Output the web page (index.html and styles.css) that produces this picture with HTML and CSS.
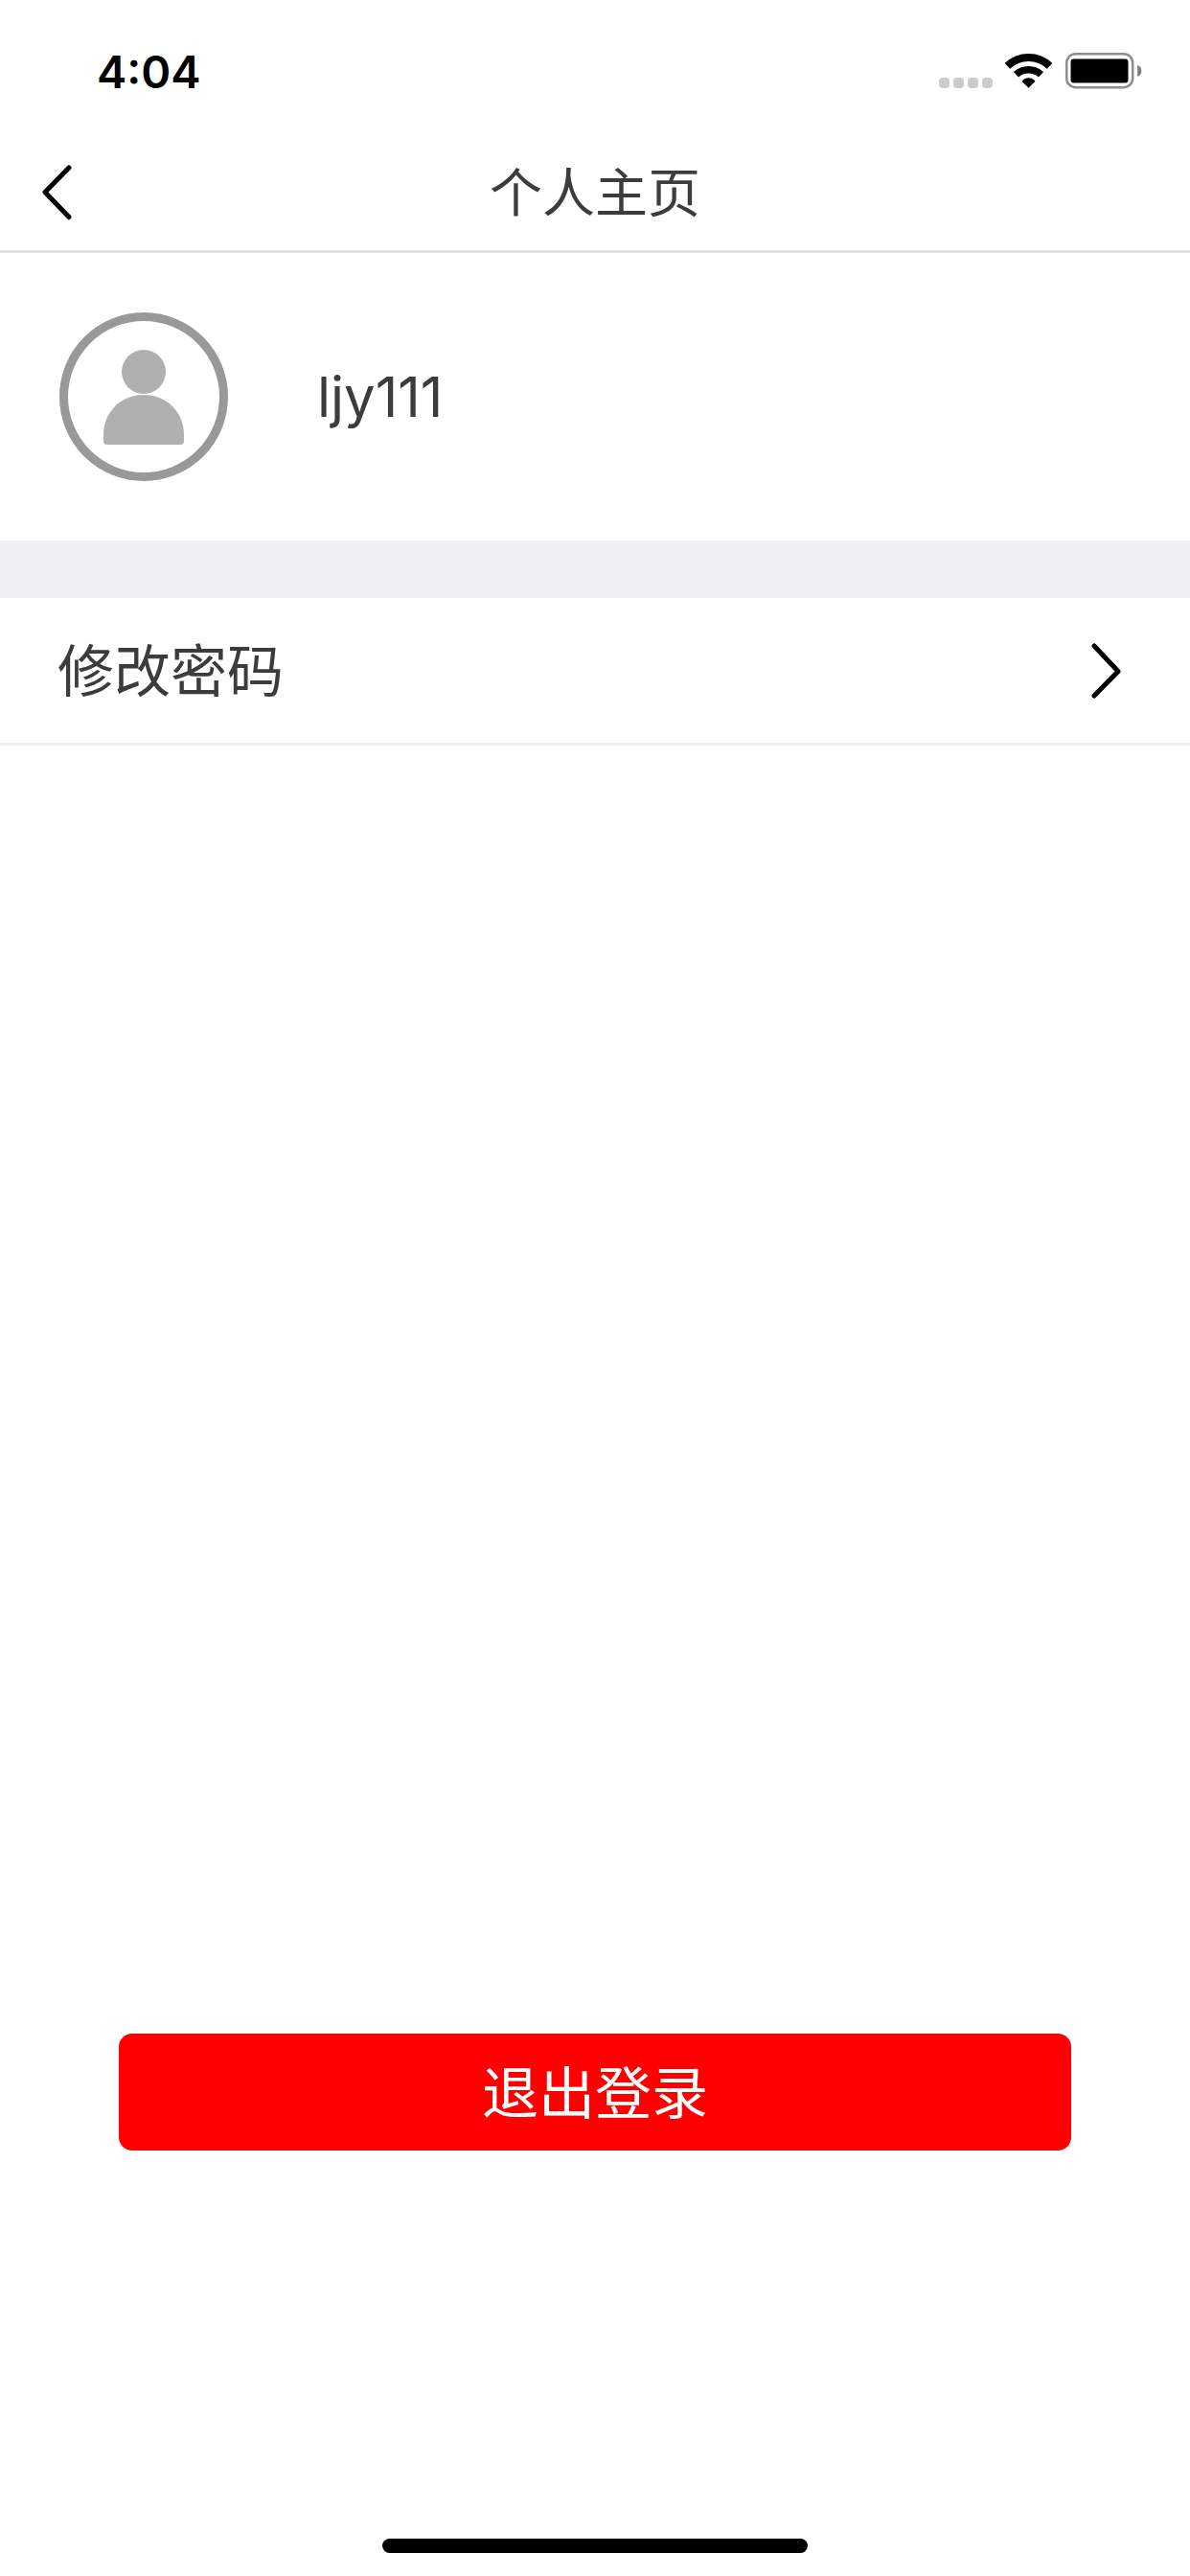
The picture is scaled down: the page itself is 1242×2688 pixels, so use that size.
FILE: index.html
```html
<!DOCTYPE html>
<html lang="zh-CN">
<head>
<meta charset="utf-8">
<meta name="viewport" content="width=device-width, initial-scale=1">
<title>个人主页</title>
<link rel="stylesheet" href="styles.css">
</head>
<body>
<div class="screen">
  <div class="status-bar">
    <time class="clock">4:04</time>
    <svg class="status-icons" width="214" height="40" viewBox="0 0 214 40" aria-hidden="true">
      <g fill="#cbcbcb">
        <rect x="1" y="27" width="11" height="11" rx="4"/>
        <rect x="16" y="27" width="11" height="11" rx="4"/>
        <rect x="31" y="27" width="11" height="11" rx="4"/>
        <rect x="46" y="27" width="11" height="11" rx="4"/>
      </g>
      <g fill="none" stroke="#000">
        <path d="M72.500 14.800A32 32 0 0 1 116.500 14.800" stroke-width="8"/>
        <path d="M81.500 23.800A19 19 0 0 1 107.500 23.800" stroke-width="7.500"/>
      </g>
      <path d="M94.500 37.800L87.500 30.800C91.500 26.200 97.500 26.200 101.500 30.800Z"/>
      <rect x="134.200" y="2.200" width="69" height="35" rx="9.500" fill="none" stroke="#8e8e8e" stroke-width="2.500"/>
      <rect x="138.500" y="7.500" width="60" height="25" rx="3"/>
      <path d="M208.200 14C211 15 212.400 17 212.400 20S211 25 208.200 26Z" fill="#7c7c7c"/>
    </svg>
  </div>

  <header class="nav-bar">
    <button class="back" type="button" aria-label="返回">
      <svg width="32" height="58" viewBox="0 0 32 58" aria-hidden="true"><path d="M29 3L4 28.500L29 54.500"/></svg>
    </button>
    <h1 class="title">个人主页</h1>
  </header>

  <main class="content">
    <section class="profile">
      <svg class="avatar" width="176" height="176" viewBox="0 0 176 176" aria-hidden="true">
        <circle cx="88" cy="88" r="83.500" fill="none" stroke="#999" stroke-width="9"/>
        <circle cx="88" cy="62" r="23" fill="#b0b0b0"/>
        <path d="M46 128C46 104 64 86 88 86S130 104 130 128V134Q130 138 126 138H50Q46 138 46 134Z" fill="#b0b0b0"/>
      </svg>
      <p class="username">ljy111</p>
    </section>

    <a class="menu-row" href="#password">
      <span class="menu-label">修改密码</span>
      <svg width="32" height="58" viewBox="0 0 32 58" aria-hidden="true"><path d="M3 3L28 29.500L3 55"/></svg>
    </a>

    <button class="logout" type="button">退出登录</button>
  </main>

  <div class="home-indicator"></div>
</div>
</body>
</html>
```
FILE: styles.css
```css
* {
  box-sizing: border-box;
}

body {
  margin: 0;
  background: #fff;
  color: #3c3c3c;
  font-family: Inter, "Noto Sans CJK SC", sans-serif;
  font-size: 59px;
}

h1,
p {
  margin: 0;
  font-weight: 400;
}

svg {
  display: block;
  flex: none;
}

.screen {
  display: flex;
  flex-direction: column;
  min-height: 100vh;
}

.status-bar {
  display: flex;
  align-items: center;
  justify-content: space-between;
  height: 132px;
  padding: 16px 49px 0 101px;
}

.clock {
  color: #000;
  font-size: 47px;
  font-weight: 600;
}

.nav-bar {
  display: grid;
  grid-template-columns: 120px 1fr 120px;
  align-items: center;
  height: 132px;
  padding-top: 8px;
  border-bottom: 3px solid #e2e2e2;
}

.back {
  padding: 0 0 0 43px;
  border: 0;
  background: none;
}

.back path,
.menu-row path {
  fill: none;
  stroke: #000;
  stroke-width: 5;
  stroke-linecap: round;
  stroke-linejoin: round;
}

.title {
  font-size: 55px;
  line-height: 80px;
  text-align: center;
}

.content {
  display: flex;
  flex: 1;
  flex-direction: column;
}

.profile {
  display: flex;
  align-items: center;
  gap: 93px;
  height: 300px;
  padding: 0 62px;
}

.username {
  font-size: 58px;
}

.menu-row {
  display: flex;
  align-items: center;
  justify-content: space-between;
  height: 214px;
  padding: 0 71px 0 60px;
  border-top: 60px solid #efeff4;
  border-bottom: 3px solid #efeff4;
  color: inherit;
  text-decoration: none;
}

.menu-label {
  padding-bottom: 6px;
}

.logout {
  height: 122px;
  margin: auto 10% 405px;
  padding: 0 0 6px;
  border: 0;
  border-radius: 14px;
  background: #f00;
  color: #fff;
  font: inherit;
}

.home-indicator {
  align-self: center;
  width: 444px;
  height: 15px;
  margin-bottom: 24px;
  border-radius: 8px;
  background: #000;
}
```
